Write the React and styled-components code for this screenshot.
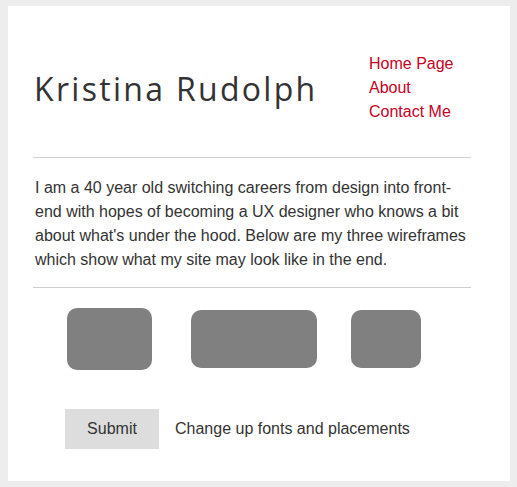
import React from 'react';
import styled, { createGlobalStyle } from 'styled-components';

const GlobalStyle = createGlobalStyle`
  html, body {
    background: #ededed;
  }
  body {
    margin: 6px 7px 6px 8px;
    font-family: "Liberation Sans", Arial, sans-serif;
    color: #333;
  }
`
const Card = styled.div`
  background: #fff;
  min-height: 475px;
  padding: 0 39px 0 25px;
  box-sizing: border-box;
`
const Header = styled.header`
  display: flex;
  align-items: center;
  padding: 46px 0 33px;
`
const Title = styled.h1`
  flex: 1;
  margin: 0 0 0 1px;
  font-family: "Open Sans", sans-serif;
  font-weight: 400;
  font-size: 32px;
  letter-spacing: 2.3px;
  color: #333;
  line-height: 1;
  padding-top: 2px;
`
const Nav = styled.nav`
  display: flex;
  flex-direction: column;
  width: 102px;
`
const NavLink = styled.a`
  color: #c8001e;
  text-decoration: none;
  font-size: 16px;
  line-height: 24px;
`
const Rule = styled.hr`
  border: 0;
  border-top: 1px solid #cfcfcf;
  margin: 0;
`
const Intro = styled.p`
  margin: 0;
  padding: 18px 0 15px 2px;
  font-size: 16px;
  line-height: 24px;
  color: #333;
`
const Frames = styled.div`
  display: flex;
  align-items: center;
  padding: 20px 0 0 34px;
  height: 62px;
`
const Frame = styled.div`
  background: #808080;
  border-radius: 10px;
  width: ${p => p.w}px;
  height: ${p => p.h}px;
  margin-right: ${p => p.gap || 0}px;
`
const Actions = styled.div`
  display: flex;
  align-items: center;
  gap: 16px;
  padding: 39px 0 0 32px;
`
const Button = styled.button`
  width: 94px;
  height: 40px;
  border: 0;
  background: #dddddd;
  color: #333;
  font-family: "Liberation Sans", Arial, sans-serif;
  font-size: 16px;
  cursor: pointer;
`
const Note = styled.span`
  font-size: 16px;
  color: #333;
`

const App = () => {
  return (
    <>
      <GlobalStyle />
      <Card>
        <Header>
          <Title>Kristina Rudolph</Title>
          <Nav>
            <NavLink href="#">Home Page</NavLink>
            <NavLink href="#">About</NavLink>
            <NavLink href="#">Contact Me</NavLink>
          </Nav>
        </Header>
        <Rule />
        <Intro>
          I am a 40 year old switching careers from design into front-end with hopes of becoming a UX designer who knows a bit about what's under the hood. Below are my three wireframes which show what my site may look like in the end.
        </Intro>
        <Rule />
        <Frames>
          <Frame w={85} h={62} gap={39} />
          <Frame w={126} h={58} gap={34} />
          <Frame w={70} h={58} />
        </Frames>
        <Actions>
          <Button>Submit</Button>
          <Note>Change up fonts and placements</Note>
        </Actions>
      </Card>
    </>
  )
}

export default App
